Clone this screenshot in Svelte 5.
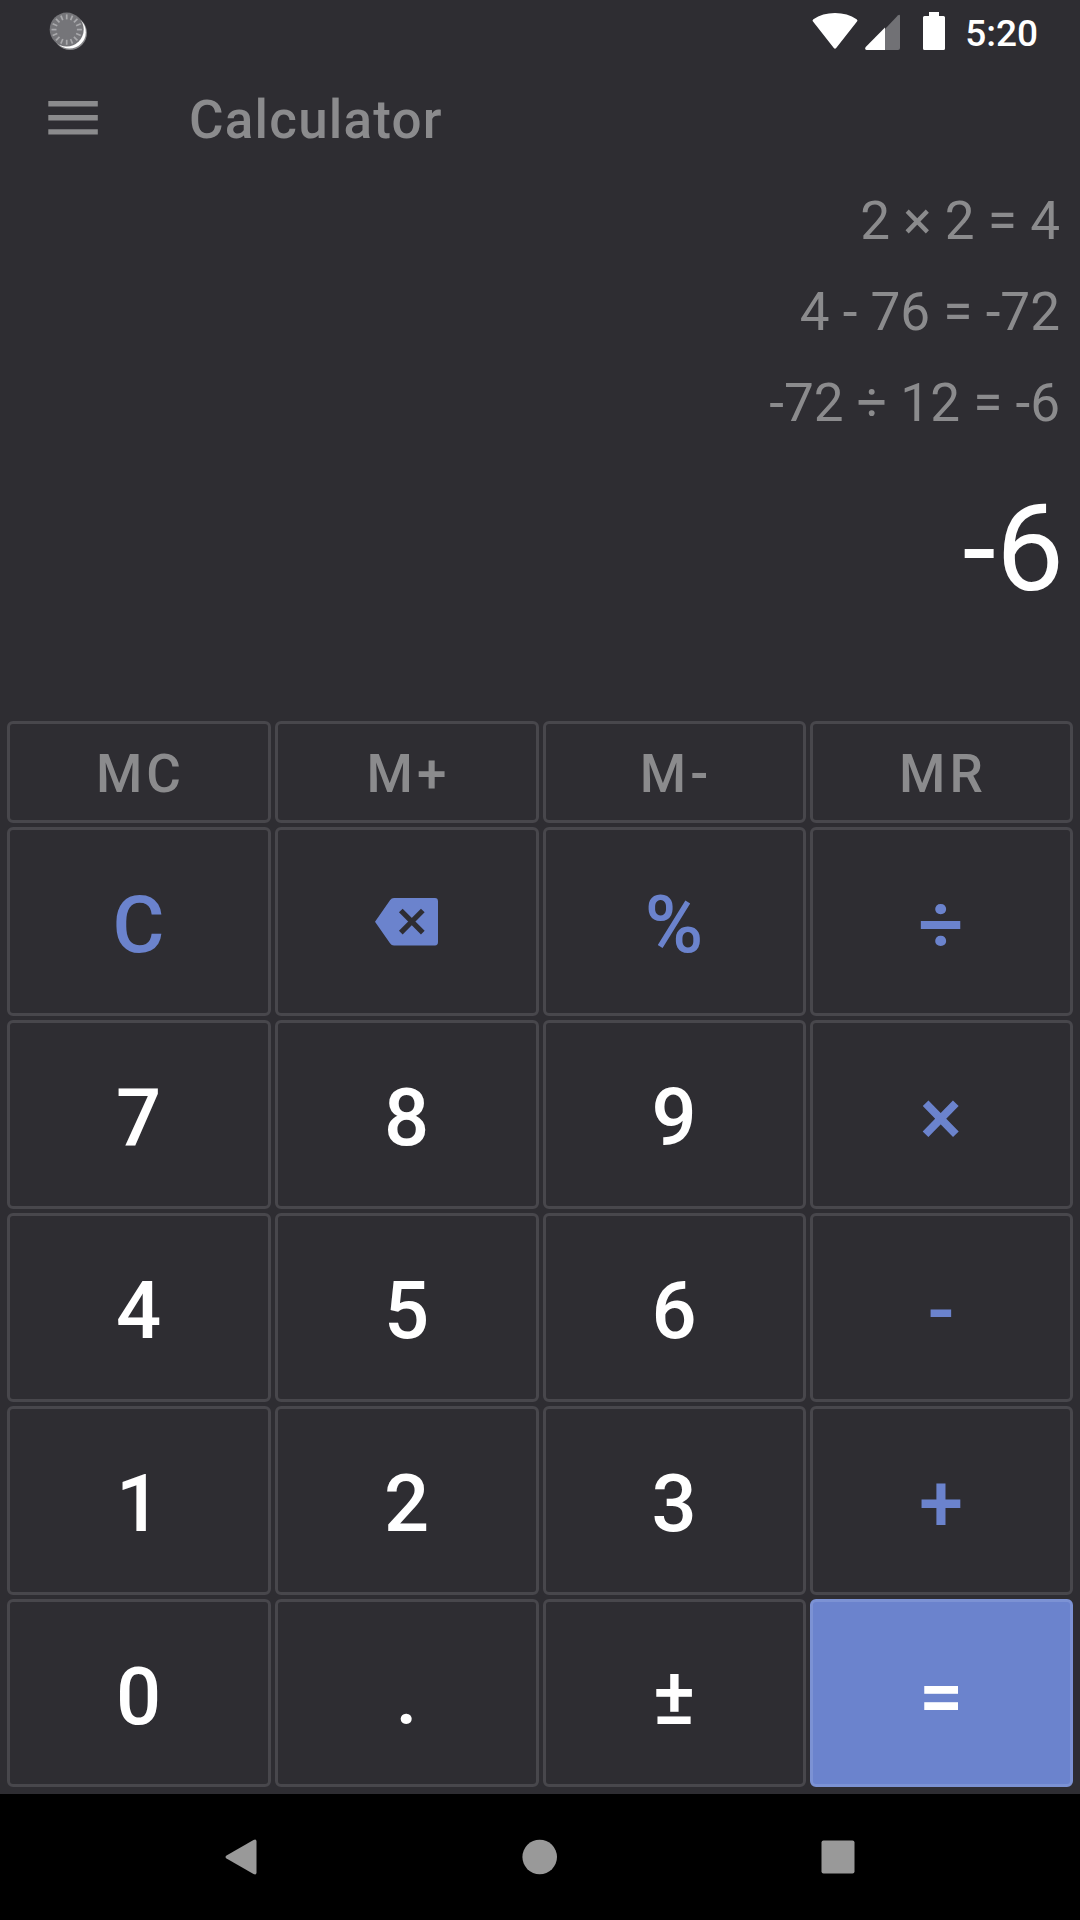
<script>
  const history = ['2 × 2 = 4', '4 - 76 = -72', '-72 ÷ 12 = -6'];
  const result = '-6';
  const memory = ['MC', 'M+', 'M-', 'MR'];
  const keys = [
    { label: 'C', kind: 'op' }, { label: 'back', kind: 'icon' }, { label: '%', kind: 'op' }, { label: '÷', kind: 'op' },
    { label: '7' }, { label: '8' }, { label: '9' }, { label: '×', kind: 'op' },
    { label: '4' }, { label: '5' }, { label: '6' }, { label: '-', kind: 'op' },
    { label: '1' }, { label: '2' }, { label: '3' }, { label: '+', kind: 'op' },
    { label: '0' }, { label: '.' }, { label: '±' }, { label: '=', kind: 'equals' }
  ];
  const ticks = Array.from({ length: 16 }, (_, i) => i * 22.5);
</script>

<div class="screen">
  <div class="status">
    <svg class="spinner" width="40" height="42" viewBox="0 0 40 42">
      <circle cx="22" cy="23" r="17" fill="#858588" />
      <circle cx="21.4" cy="22.2" r="16.4" fill="#fff" />
      <circle cx="18.7" cy="19.6" r="17" fill="#757579" />
      {#each ticks as angle}
        <line x1="18.7" y1="4.4" x2="18.7" y2="9.400" stroke="#a9a9ac" stroke-width="1.700" transform="rotate({angle} 18.7 19.6)" />
      {/each}
    </svg>
    <div class="system">
      <svg class="wifi" width="46" height="37" viewBox="0 0 46 37">
        <path d="M1 9.5Q0 8.3 1.4 7.2Q10.500 1 23 1T44.600 7.200Q46 8.300 45 9.500L24.200 36Q23 37.400 21.800 36Z" fill="#fff" />
      </svg>
      <svg class="signal" width="36" height="36" viewBox="0 0 36 36">
        <path d="M20 15L32.800 1.400Q35 -.3 35 2V34Q35 36 33 36H20Z" fill="#717175" />
        <path d="M20 13.500V36H1.500Q-.8 35.500 .7 33Z" fill="#fff" />
      </svg>
      <svg class="battery" width="22" height="38" viewBox="0 0 22 38">
        <path d="M6 0H16V4H20.500Q22 4 22 5.500V36.500Q22 38 20.500 38H1.500Q0 38 0 36.500V5.500Q0 4 1.500 4H6Z" fill="#fff" />
      </svg>
      <span class="clock">5:20</span>
    </div>
  </div>

  <header class="toolbar">
    <svg class="menu" width="50" height="34" viewBox="0 0 50 34">
      <path d="M.3 0H49.800V5.400H.3ZM.3 14.100H49.800V19.500H.3ZM.3 28.200H49.800V33.600H.3Z" fill="#8b8b8d" />
    </svg>
    <h1>Calculator</h1>
  </header>

  <section class="display">
    {#each history as line}
      <div class="line">{line}</div>
    {/each}
    <div class="result">{result}</div>
  </section>

  <main class="pad">
    {#each memory as label}
      <button class="key memory">{label}</button>
    {/each}
    {#each keys as key}
      <button class="key {key.kind ?? ''}" aria-label={key.label}>
        {#if key.kind === 'icon'}
          <svg width="64" height="48" viewBox="0 0 64 48">
            <path d="M60 0H19Q16.500 0 15 2.200L0 23.700L15 45.200Q16.500 47.400 19 47.400H60Q63 47.400 63 44V3.400Q63 0 60 0Z" fill="#6b83cd" />
            <path d="M25.800 12.500L47.800 34.700M47.800 12.500L25.800 34.700" stroke="#2e2d32" stroke-width="5.200" />
          </svg>
        {:else}
          {key.label}
        {/if}
      </button>
    {/each}
  </main>

  <nav class="navbar">
    <svg width="33" height="36" viewBox="0 0 33 36">
      <path d="M1.500 16.500L28.500 1Q31.500 -.3 31.500 2.500V33.500Q31.500 36.300 28.500 35L1.500 19.500Q-.5 18 1.500 16.500Z" fill="#999" />
    </svg>
    <svg width="36" height="36" viewBox="0 0 36 36"><circle cx="17.700" cy="18" r="17.300" fill="#999" /></svg>
    <svg width="34" height="34" viewBox="0 0 34 34"><rect x=".5" y=".5" width="33" height="33" rx="2" fill="#999" /></svg>
  </nav>
</div>

<style>
  :global(body) {
    margin: 0;
    background: #2e2d32;
  }

  .screen {
    display: flex;
    flex-direction: column;
    width: 1080px;
    height: 1920px;
    background: #2e2d32;
    color: #fff;
    font-family: Roboto, sans-serif;
  }

  .status {
    display: flex;
    justify-content: space-between;
    box-sizing: border-box;
    height: 63px;
    padding: 10px 42px 0 48px;
  }

  .system {
    display: flex;
    align-items: flex-start;
  }

  .wifi {
    margin: 2px 6.700px 0 0;
  }

  .signal {
    margin: 4px 22px 0 0;
  }

  .battery {
    margin: 2px 20.600px 0 0;
  }

  .clock {
    font-size: 37px;
    font-weight: 500;
    line-height: 48px;
  }

  .toolbar {
    display: flex;
    align-items: center;
    height: 113px;
    padding-left: 48px;
  }

  .menu {
    margin-top: -3px;
  }

  h1 {
    margin: 0 0 0 91px;
    color: #8b8b8d;
    font-size: 53px;
    font-weight: 500;
    letter-spacing: 1.200px;
  }

  .display {
    box-sizing: border-box;
    height: 545px;
    padding-right: 20px;
    text-align: right;
  }

  .line {
    color: #8b8b8d;
    font-size: 53.100px;
    line-height: 91px;
  }

  .result {
    margin: 30px -4px 0 0;
    font-size: 121px;
    line-height: 140px;
  }

  .pad {
    display: grid;
    grid-template-columns: 264px 264px 263px 263px;
    grid-template-rows: 102px repeat(4, 189px) 188px;
    gap: 4px;
    padding: 0 7px 7px;
  }

  .key {
    display: flex;
    align-items: center;
    justify-content: center;
    padding: 6.500px 1px 0 0;
    border: 3px solid #48474c;
    border-radius: 6px;
    background: transparent;
    color: #fff;
    font: 500 79.500px/1 Roboto, sans-serif;
  }

  .memory {
    padding: 4px 0 0 3px;
    color: #8b8b8d;
    font-size: 53px;
    letter-spacing: 4.100px;
  }

  .op {
    color: #6b83cd;
  }

  .icon {
    padding: 0;
  }

  .equals {
    border-color: #7c92d4;
    background: #6b83cd;
  }

  .navbar {
    display: flex;
    align-items: center;
    justify-content: space-between;
    box-sizing: border-box;
    height: 126px;
    padding: 0 225px;
    background: #000;
  }
</style>
